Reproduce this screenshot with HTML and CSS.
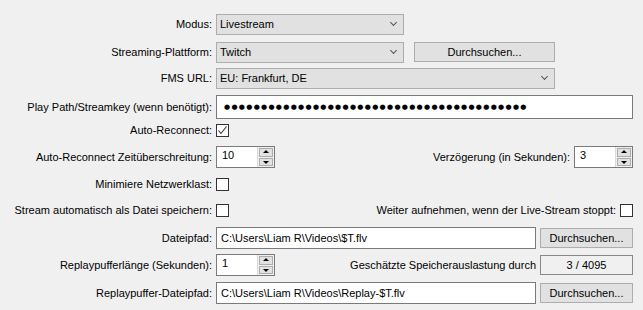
FILE: index.html
```html
<!DOCTYPE html>
<html lang="de">
<head>
    <meta charset="UTF-8">
    <title>Stream-Einstellungen</title>
    <link rel="stylesheet" href="styles.css">
</head>
<body>
    <div class="form">
        <div class="row">
            <label class="label">Modus:</label>
            <div class="combo combo-short"><span>Livestream</span><span class="chevron"></span></div>
        </div>

        <div class="row">
            <label class="label">Streaming-Plattform:</label>
            <div class="combo combo-short"><span>Twitch</span><span class="chevron"></span></div>
            <button class="btn btn-wide">Durchsuchen...</button>
        </div>

        <div class="row">
            <label class="label">FMS URL:</label>
            <div class="combo combo-long"><span>EU: Frankfurt, DE</span><span class="chevron"></span></div>
        </div>

        <div class="row">
            <label class="label">Play Path/Streamkey (wenn benötigt):</label>
            <div class="edit edit-key"><span class="dots">●●●●●●●●●●●●●●●●●●●●●●●●●●●●●●●●●●●●●●●●●</span></div>
        </div>

        <div class="row">
            <label class="label">Auto-Reconnect:</label>
            <span class="check">
                <svg width="11" height="11" viewBox="0 0 11 11"><polyline points="1.5,5.5 4,8.5 9.5,1.5" fill="none" stroke="#333" stroke-width="1.1"/></svg>
            </span>
        </div>

        <div class="row">
            <label class="label">Auto-Reconnect Zeitüberschreitung:</label>
            <div class="spin">
                <span class="spin-value">10</span>
                <span class="spin-btns"><span class="spin-up"></span><span class="spin-down"></span></span>
            </div>
            <label class="label-inline">Verzögerung (in Sekunden):</label>
            <div class="spin">
                <span class="spin-value">3</span>
                <span class="spin-btns"><span class="spin-up"></span><span class="spin-down"></span></span>
            </div>
        </div>

        <div class="row">
            <label class="label">Minimiere Netzwerklast:</label>
            <span class="check"></span>
        </div>

        <div class="row">
            <label class="label">Stream automatisch als Datei speichern:</label>
            <span class="check"></span>
            <label class="label-inline">Weiter aufnehmen, wenn der Live-Stream stoppt:</label>
            <span class="check"></span>
        </div>

        <div class="row">
            <label class="label">Dateipfad:</label>
            <div class="edit edit-path">C:\Users\Liam R\Videos\$T.flv</div>
            <button class="btn btn-small">Durchsuchen...</button>
        </div>

        <div class="row">
            <label class="label">Replaypufferlänge (Sekunden):</label>
            <div class="spin">
                <span class="spin-value">1</span>
                <span class="spin-btns"><span class="spin-up"></span><span class="spin-down"></span></span>
            </div>
            <label class="label-inline">Geschätzte Speicherauslastung durch</label>
            <div class="readout">3 / 4095</div>
        </div>

        <div class="row">
            <label class="label">Replaypuffer-Dateipfad:</label>
            <div class="edit edit-path">C:\Users\Liam R\Videos\Replay-$T.flv</div>
            <button class="btn btn-small">Durchsuchen...</button>
        </div>
    </div>
</body>
</html>
```

FILE: styles.css
```css
body {
    margin: 0;
    background-color: #f0f0f0;
    font-family: 'Liberation Sans', Arial, sans-serif;
    font-size: 11px;
    color: #000;
}

.form {
    display: grid;
    grid-template-rows: 28px 26px 29px 23px 27px 27px 26px 28px 27px 28px 22px;
    padding: 13px 10px 0 0;
    width: 633px;
}

.row {
    display: flex;
    align-items: center;
    height: 22px;
}

.label {
    width: 216px;
    flex: none;
    box-sizing: border-box;
    padding-right: 4px;
    text-align: right;
    white-space: nowrap;
}

.label-inline {
    flex: 1;
    text-align: right;
    padding-right: 4px;
    white-space: nowrap;
}

/* combo boxes */
.combo {
    display: flex;
    align-items: center;
    justify-content: space-between;
    box-sizing: border-box;
    height: 21px;
    padding: 0 7px 0 3px;
    background-color: #e1e1e1;
    border: 1px solid #adadad;
}

.combo-short {
    width: 188px;
}

.combo-long {
    width: 339px;
}

.chevron {
    width: 4px;
    height: 4px;
    border-right: 1px solid #555;
    border-bottom: 1px solid #555;
    transform: rotate(45deg);
    margin-top: -3px;
}

/* buttons */
.btn {
    box-sizing: border-box;
    height: 20px;
    padding: 0;
    background-color: #e1e1e1;
    border: 1px solid #adadad;
    font-family: inherit;
    font-size: 11px;
    color: #000;
}

.btn-wide {
    width: 141px;
    margin-left: 10px;
}

.btn-small {
    width: 93px;
    margin-left: 4px;
}

/* line edits */
.edit {
    display: flex;
    align-items: center;
    box-sizing: border-box;
    height: 22px;
    padding-left: 4px;
    background-color: white;
    border: 1px solid #7a7a7a;
    white-space: nowrap;
}

.edit-key {
    flex: 1;
    height: 24px;
    padding-left: 7px;
}

.edit-path {
    flex: 1;
}

.dots {
    font-family: 'DejaVu Sans', sans-serif;
    font-size: 7px;
    letter-spacing: 1.3px;
}

/* checkbox */
.check {
    display: flex;
    align-items: center;
    justify-content: center;
    width: 13px;
    height: 13px;
    box-sizing: border-box;
    background-color: white;
    border: 1px solid #333;
    flex: none;
}

/* spin boxes */
.spin {
    display: flex;
    box-sizing: border-box;
    width: 59px;
    height: 22px;
    background-color: white;
    border: 1px solid #7a7a7a;
    flex: none;
}

.spin-value {
    flex: 1;
    padding: 2px 0 0 5px;
}

.spin-btns {
    display: flex;
    flex-direction: column;
    width: 16px;
    background-color: #f0f0f0;
    border-left: 1px solid #d9d9d9;
}

.spin-up,
.spin-down {
    flex: 1;
    position: relative;
    margin: 1px;
    background-color: #e1e1e1;
    border: 1px solid #adadad;
}

.spin-down {
    margin-top: 0;
}

.spin-up::after,
.spin-down::after {
    content: '';
    position: absolute;
    left: 50%;
    top: 50%;
    margin-left: -3px;
    border-left: 3px solid transparent;
    border-right: 3px solid transparent;
}

.spin-up::after {
    margin-top: -2px;
    border-bottom: 3px solid #000;
}

.spin-down::after {
    margin-top: -1px;
    border-top: 3px solid #000;
}

/* estimated usage */
.readout {
    box-sizing: border-box;
    width: 93px;
    height: 20px;
    line-height: 18px;
    text-align: center;
    background-color: #f0f0f0;
    border: 1px solid #888;
}
```
